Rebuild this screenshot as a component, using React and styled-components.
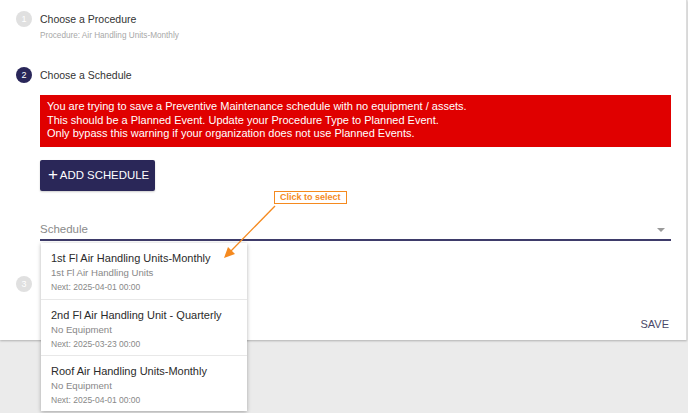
import React from "react";
import styled, { createGlobalStyle } from "styled-components";

const GlobalStyle = createGlobalStyle`
  html, body {
    margin: 0;
    padding: 0;
    background: #ebebeb;
    font-family: "Liberation Sans", Arial, sans-serif;
  }
`;

const Page = styled.div`
  position: relative;
  width: 688px;
  height: 413px;
  overflow: hidden;
  background: #ebebeb;
`;

const Panel = styled.div`
  width: 687px;
  height: 340px;
  box-sizing: border-box;
  background: #fff;
  border-right: 1px solid #dcdcdc;
  box-shadow: 0 1px 2px rgba(0, 0, 0, 0.25);
  padding: 11px 16px 0 16px;
  display: flex;
  flex-direction: column;
`;

const StepHead = styled.div`
  display: flex;
  align-items: center;
  gap: 8px;
  height: 16px;
  margin-top: ${({ top }) => top || 0}px;
`;

const Circle = styled.div`
  width: 16px;
  height: 16px;
  border-radius: 50%;
  background: ${({ active }) => (active ? "#292659" : "#e0e0e0")};
  color: #fff;
  font-size: 9px;
  display: flex;
  align-items: center;
  justify-content: center;
  flex-shrink: 0;
`;

const StepTitle = styled.div`
  font-size: 10.5px;
  color: #333;
`;

const StepSub = styled.div`
  margin: 4px 0 0 24px;
  font-size: 8.2px;
  color: #a8a8a8;
`;

const StepBody = styled.div`
  margin-left: 24px;
  display: flex;
  flex-direction: column;
  align-items: flex-start;
`;

const Warning = styled.div`
  box-sizing: border-box;
  width: 631px;
  margin-top: 12px;
  padding: 5px 7px 6px;
  background: #e00000;
  color: #fff;
  font-size: 11px;
  line-height: 13.6px;
`;

const AddButton = styled.button`
  margin-top: 13px;
  height: 31px;
  width: 115px;
  border: none;
  border-radius: 2px;
  background: #2a2758;
  color: #fff;
  font-family: "Liberation Sans", Arial, sans-serif;
  font-size: 11.4px;
  display: flex;
  align-items: center;
  justify-content: center;
  gap: 2px;
  padding: 0 0 0 2px;
  box-shadow: 0 1px 2px rgba(0, 0, 0, 0.2);
`;

const Plus = styled.span`
  font-size: 17px;
  line-height: 12px;
  margin-top: -1px;
`;

const SelectField = styled.div`
  position: relative;
  width: 631px;
  margin-top: 30px;
  height: 18px;
  border-bottom: 2px solid #3e3b6a;
  display: flex;
  align-items: center;
  justify-content: space-between;
`;

const SelectLabel = styled.div`
  font-size: 11.5px;
  color: #8a8a8a;
  margin-top: -1px;
`;

const Caret = styled.div`
  width: 0;
  height: 0;
  border-left: 4px solid transparent;
  border-right: 4px solid transparent;
  border-top: 4px solid #9a9a9a;
  margin-right: 6px;
`;

const Menu = styled.div`
  position: absolute;
  top: 22px;
  left: 1px;
  width: 206px;
  background: #fff;
  box-shadow: 0 1px 4px rgba(0, 0, 0, 0.3);
  z-index: 5;
`;

const MenuItem = styled.div`
  height: 56px;
  box-sizing: border-box;
  padding: 8px 10px 0;
  border-top: ${({ first }) => (first ? "none" : "1px solid #e8e8e8")};
`;

const ItemTitle = styled.div`
  font-size: 11px;
  color: #2b2b2b;
  line-height: 14px;
`;

const ItemSub = styled.div`
  font-size: 9.6px;
  color: #888;
  line-height: 14px;
  margin-top: 1px;
`;

const ItemNext = styled.div`
  font-size: 8.5px;
  color: #888;
  line-height: 14px;
`;

const Footer = styled.div`
  display: flex;
  justify-content: flex-end;
  margin-top: 26px;
  padding-right: 1px;
`;

const SaveText = styled.div`
  font-size: 11px;
  color: #4a4868;
`;

const Callout = styled.div`
  position: absolute;
  left: 274px;
  top: 191px;
  padding: 0 5px;
  height: 11px;
  border: 1px solid #f58a1f;
  background: #fff;
  color: #f58a1f;
  font-size: 9px;
  font-weight: bold;
  line-height: 11px;
  z-index: 6;
`;

const ArrowSvg = styled.svg`
  position: absolute;
  left: 218px;
  top: 200px;
  z-index: 6;
`;

const items = [
  { title: "1st Fl Air Handling Units-Monthly", sub: "1st Fl Air Handling Units", next: "Next: 2025-04-01 00:00" },
  { title: "2nd Fl Air Handling Unit - Quarterly", sub: "No Equipment", next: "Next: 2025-03-23 00:00" },
  { title: "Roof Air Handling Units-Monthly", sub: "No Equipment", next: "Next: 2025-04-01 00:00" },
];

export default function App() {
  return (
    <Page>
      <GlobalStyle />
      <Panel>
        <StepHead>
          <Circle>1</Circle>
          <StepTitle>Choose a Procedure</StepTitle>
        </StepHead>
        <StepSub>Procedure: Air Handling Units-Monthly</StepSub>

        <StepHead top={27}>
          <Circle active>2</Circle>
          <StepTitle>Choose a Schedule</StepTitle>
        </StepHead>
        <StepBody>
          <Warning>
            You are trying to save a Preventive Maintenance schedule with no equipment / assets.
            <br />
            This should be a Planned Event. Update your Procedure Type to Planned Event.
            <br />
            Only bypass this warning if your organization does not use Planned Events.
          </Warning>
          <AddButton>
            <Plus>+</Plus>ADD SCHEDULE
          </AddButton>
          <SelectField>
            <SelectLabel>Schedule</SelectLabel>
            <Caret />
            <Menu>
              {items.map((it, i) => (
                <MenuItem key={i} first={i === 0}>
                  <ItemTitle>{it.title}</ItemTitle>
                  <ItemSub>{it.sub}</ItemSub>
                  <ItemNext>{it.next}</ItemNext>
                </MenuItem>
              ))}
            </Menu>
          </SelectField>
        </StepBody>

        <StepHead top={35}>
          <Circle>3</Circle>
        </StepHead>
        <Footer>
          <SaveText>SAVE</SaveText>
        </Footer>
      </Panel>

      <Callout>Click to select</Callout>
      <ArrowSvg width="70" height="64" viewBox="0 0 70 64">
        <line x1="57" y1="6" x2="12" y2="52" stroke="#f58a1f" strokeWidth="1.3" />
        <polygon points="6,58 10,47 17,54" fill="#f58a1f" />
      </ArrowSvg>
    </Page>
  );
}
